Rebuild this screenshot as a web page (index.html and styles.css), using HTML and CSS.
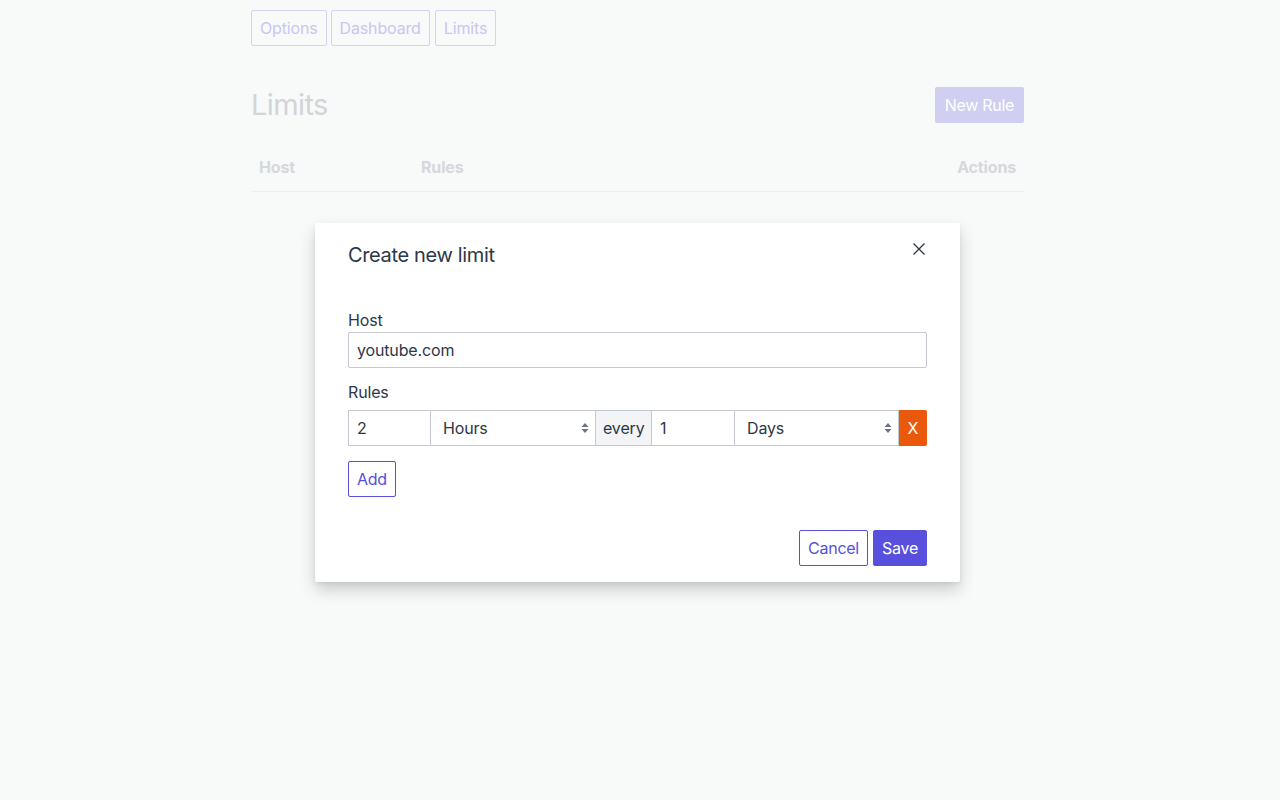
FILE: index.html
```html
<!DOCTYPE html>
<html>
<head>
<meta charset="utf-8">
<link rel="stylesheet" href="styles.css">
</head>
<body>
<div class="page">
  <div class="container">
    <nav class="nav">
      <a class="nav-btn">Options</a>
      <a class="nav-btn">Dashboard</a>
      <a class="nav-btn">Limits</a>
    </nav>
    <div class="title-row">
      <h1 class="title">Limits</h1>
      <button class="new-rule">New Rule</button>
    </div>
    <div class="table-head">
      <div class="th th-host">Host</div>
      <div class="th th-rules">Rules</div>
      <div class="th th-actions">Actions</div>
    </div>
  </div>
</div>

<div class="modal">
  <div class="modal-header">
    <h2 class="modal-title">Create new limit</h2>
    <button class="close" aria-label="close">
      <svg width="14" height="14" viewBox="0 0 14 14"><path d="M1.5 1.5 L12.5 12.5 M12.5 1.5 L1.5 12.5" stroke="#2d3748" stroke-width="1.3" fill="none"/></svg>
    </button>
  </div>
  <div class="modal-body">
    <label class="label label-host">Host</label>
    <div class="input host-input">youtube.com</div>
    <label class="label label-rules">Rules</label>
    <div class="rule-row">
      <div class="cell num">2</div>
      <div class="cell sel">Hours<span class="arrows"><svg width="8" height="12" viewBox="0 0 8 12"><path d="M4 1 L7.5 5 H0.5 Z M4 11 L7.5 7 H0.5 Z" fill="#6b7280"/></svg></span></div>
      <div class="cell addon">every</div>
      <div class="cell num">1</div>
      <div class="cell sel sel2">Days<span class="arrows"><svg width="8" height="12" viewBox="0 0 8 12"><path d="M4 1 L7.5 5 H0.5 Z M4 11 L7.5 7 H0.5 Z" fill="#6b7280"/></svg></span></div>
      <button class="remove">X</button>
    </div>
    <button class="btn-outline add">Add</button>
  </div>
  <div class="modal-footer">
    <button class="btn-outline">Cancel</button>
    <button class="btn-primary">Save</button>
  </div>
</div>
</body>
</html>
```

FILE: styles.css
```css
* { box-sizing: border-box; }
html, body { margin: 0; padding: 0; }
body {
  background: #f8f9f9;
  font-family: Inter, "Noto Sans", sans-serif;
  font-size: 16px;
  letter-spacing: -0.15px;
  color: #2d3748;
  min-height: 800px;
}
.page { width: 1275px; }
.container {
  width: 773px;
  margin: 0 auto;
  padding-top: 10px;
}
.nav { display: flex; gap: 4px; }
.nav-btn {
  display: inline-block;
  height: 36px;
  line-height: 34px;
  padding: 0 8px;
  border: 1px solid #d3d1f4;
  border-radius: 2px;
  color: #c9c6f2;
  font-size: 16px;
}
.nav-btn + .nav-btn + .nav-btn { margin-left: 1px; }
.title-row {
  display: flex;
  justify-content: space-between;
  align-items: center;
  margin-top: 41px;
}
.title {
  margin: 0;
  font-size: 29px;
  font-weight: 400;
  letter-spacing: -0.6px;
  color: #d2d4d8;
  line-height: 36px;
}
.new-rule {
  border: none;
  background: #d0cef1;
  color: #ffffff;
  font-family: inherit;
  font-size: 16px;
  letter-spacing: -0.3px;
  height: 36px;
  padding: 0 10px;
  border-radius: 2px;
}
.table-head {
  display: flex;
  margin-top: 20px;
  padding: 12px 8px;
  border-bottom: 1px solid #eceef0;
}
.th {
  font-weight: 700;
  color: #d5d8dc;
  line-height: 24px;
}
.th-host { width: 162px; }
.th-rules { flex: 1; }
.th-actions { text-align: right; }

.modal {
  position: absolute;
  left: 315px;
  top: 223px;
  width: 645px;
  background: #fff;
  border-radius: 2px;
  box-shadow: 0 8px 16px rgba(0,0,0,0.18), 0 2px 4px rgba(0,0,0,0.06);
  padding: 0 33px 16px;
}
.modal-header {
  display: flex;
  justify-content: space-between;
  align-items: flex-start;
  padding-top: 18px;
}
.modal-title {
  margin: 0;
  font-size: 20px;
  font-weight: 400;
  letter-spacing: -0.35px;
  line-height: 28px;
  color: #2d3748;
}
.close {
  border: none;
  background: none;
  padding: 0;
  margin-top: 1px;
  margin-right: 1px;
  width: 14px;
  height: 14px;
  display: flex;
}
.modal-body { padding-top: 39px; }
.label {
  display: block;
  line-height: 24px;
  color: #2d3748;
}
.input {
  height: 36px;
  border: 1px solid #c3c8d2;
  border-radius: 2px;
  padding: 0 8px;
  line-height: 34px;
  color: #2d3748;
}
.label-rules { margin-top: 12px; margin-bottom: 6px; }
.rule-row { display: flex; height: 36px; }
.cell {
  height: 36px;
  border: 1px solid #c3c8d2;
  line-height: 34px;
  color: #2d3748;
  padding: 0 8px;
}
.cell + .cell { border-left: none; }
.num { width: 83px; }
.sel {
  width: 165px;
  padding-left: 12px;
  display: flex;
  justify-content: space-between;
  align-items: center;
}
.sel2 { width: 164px; }
.arrows { display: flex; margin-right: -2px; }
.addon {
  width: 56px;
  background: #f3f4f6;
  padding: 0 7px;
  color: #2d3748;
}
.remove {
  width: 28px;
  height: 36px;
  border: none;
  background: #ea580c;
  color: #fff;
  font-family: inherit;
  font-size: 16px;
  padding: 0;
  border-radius: 0 2px 2px 0;
}
.btn-outline {
  height: 36px;
  border: 1px solid #5850dc;
  background: #fff;
  color: #5850dc;
  font-family: inherit;
  font-size: 16px;
  letter-spacing: -0.25px;
  padding: 0 8px;
  border-radius: 2px;
}
.add { margin-top: 15px; }
.modal-footer {
  display: flex;
  justify-content: flex-end;
  gap: 5px;
  margin-top: 33px;
}
.btn-primary {
  height: 36px;
  border: 1px solid #5850dc;
  background: #5850dc;
  color: #fff;
  font-family: inherit;
  font-size: 16px;
  letter-spacing: -0.25px;
  padding: 0 8px;
  border-radius: 2px;
}
```
